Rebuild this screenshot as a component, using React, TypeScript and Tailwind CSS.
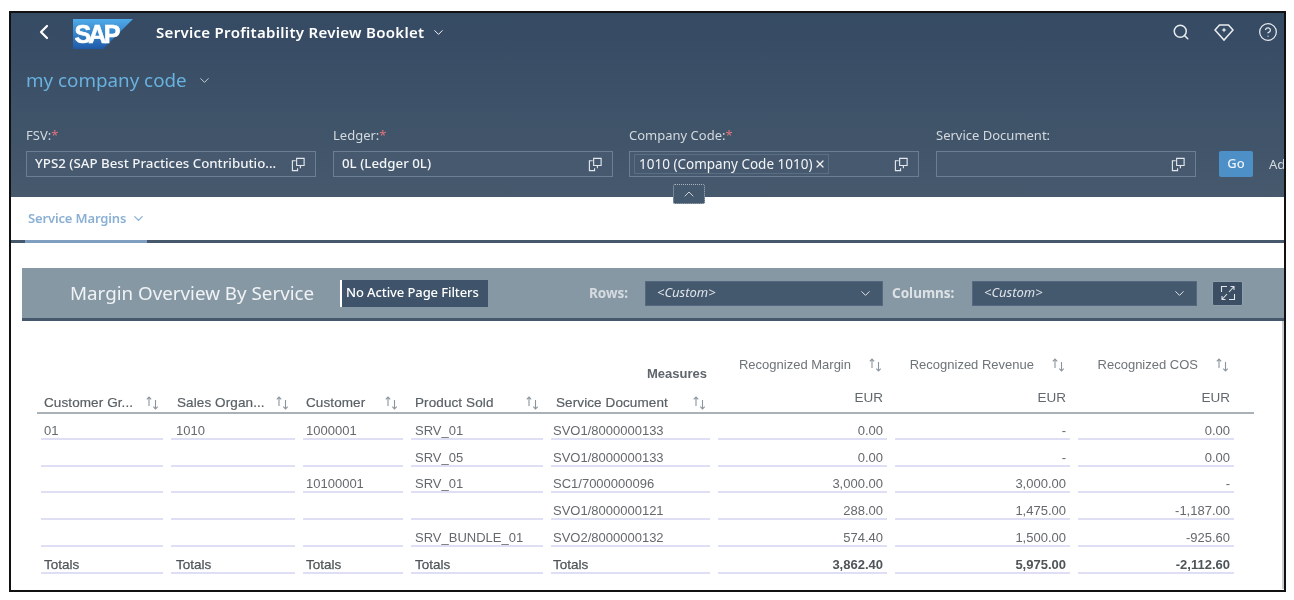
import { ChevronDown, ChevronLeft, ChevronUp, CircleHelp, Search, X } from "lucide-react";

const SortIcon = () => (
  <svg viewBox="0 0 15 14" className="w-[15px] h-[14px] shrink-0 text-[#8a949c]" fill="none" stroke="currentColor" strokeWidth="1.1">
    <path d="M4 10V1M1.8 3.4 4 1l2.2 2.4" />
    <path d="M10.5 4v9M8.3 10.6l2.2 2.4 2.2-2.4" />
  </svg>
);

const ValueHelpIcon = () => (
  <svg viewBox="0 0 16 16" className="w-[15px] h-[15px] shrink-0 text-[#e4e8ec]" fill="none" stroke="currentColor" strokeWidth="1.2">
    <path d="M5 4H1.5v10.5H7V12" />
    <path d="M6 1.5h8v7.5H6zM10 9v3" />
  </svg>
);

const DiamondIcon = () => (
  <svg viewBox="0 0 20 20" className="w-5 h-5 text-[#e8ecef]" fill="none" stroke="currentColor" strokeWidth="1.6">
    <path d="M5.5 3h9L19 8l-9 10L1 8z" />
    <path d="M10 5.5l.8 1.7 1.7.8-1.7.8-.8 1.7-.8-1.7-1.7-.8 1.7-.8z" fill="currentColor" stroke="none" />
  </svg>
);

const ExpandIcon = () => (
  <svg viewBox="0 0 16 16" className="w-4 h-4 text-[#dfe5ea]" fill="none" stroke="currentColor" strokeWidth="1.1">
    <path d="M7 1.5H1.5V7M9 14.5h5.5V9M9 7l5-5.5M10.5 1.5H14V5M7 9l-5 5.5M5.5 14.5H2V11" />
  </svg>
);

const SapLogo = () => (
  <svg viewBox="0 0 60 30" className="w-[60px] h-[30px] shrink-0">
    <defs>
      <linearGradient id="sapBlue" x1="0" y1="0" x2="0" y2="1">
        <stop offset="0" stopColor="#4fabe9" />
        <stop offset="1" stopColor="#1e5aa8" />
      </linearGradient>
    </defs>
    <polygon points="0,0 60,0 30,30 0,30" fill="url(#sapBlue)" />
    <text x="1.5" y="23.5" fontFamily="Liberation Sans, sans-serif" fontWeight="700" fontSize="25" letterSpacing="-2.8" stroke="#fff" strokeWidth="0.6" fill="#fff">
      SAP
    </text>
  </svg>
);

const Field = ({ label, required, value, width, chip }: { label: string; required?: boolean; value?: string; width: string; chip?: boolean }) => (
  <div className={`shrink-0 ${width}`}>
    <div className="h-[20px] text-[13px] leading-[20px] text-[#d3d9de]">
      {label}
      {required && <span className="text-[#e0737b]">*</span>}
    </div>
    <div className="mt-[6px] h-[26px] border border-[#6b7f93] bg-[#46596f] flex items-center justify-between pl-[8px] pr-[9px]">
      {chip ? (
        <span className="-ml-[4px] h-[20px] pl-[4px] pr-[2px] border border-[#5b6f84] flex items-center gap-[2px] text-[13.5px] text-[#f2f4f6]">
          {value}
          <X className="w-[12px] h-[12px]" strokeWidth={2.5} />
        </span>
      ) : (
        <span className="text-[13.3px] text-[#f2f4f6] font-medium">{value}</span>
      )}
      <ValueHelpIcon />
    </div>
  </div>
);

const SelectBox = ({ width }: { width: string }) => (
  <div className={`${width} h-[25px] bg-[#44586e] border border-[#54697f] flex items-center justify-between pl-[11px] pr-[9px]`}>
    <span className="italic text-[13px] text-[#dfe4e9]">&lt;Custom&gt;</span>
    <ChevronDown className="w-[15px] h-[15px] text-[#e8ecef]" strokeWidth={1.5} />
  </div>
);

const rows = [
  ["01", "1010", "1000001", "SRV_01", "SVO1/8000000133", "0.00", "-", "0.00"],
  ["", "", "", "SRV_05", "SVO1/8000000133", "0.00", "-", "0.00"],
  ["", "", "10100001", "SRV_01", "SC1/7000000096", "3,000.00", "3,000.00", "-"],
  ["", "", "", "", "SVO1/8000000121", "288.00", "1,475.00", "-1,187.00"],
  ["", "", "", "SRV_BUNDLE_01", "SVO2/8000000132", "574.40", "1,500.00", "-925.60"],
  ["Totals", "Totals", "Totals", "Totals", "Totals", "3,862.40", "5,975.00", "-2,112.60"],
];

const cellPadding = ["pl-[3px]", "pl-[5px]", "pl-[3px]", "pl-[4px]", "pl-[2px]", "justify-end pr-[4px]", "justify-end pr-[4px]", "justify-end pr-[4px]"];

const dimHeaders = [
  { name: "Customer Gr...", pad: "col-start-1 pl-[3px] pr-[3px]" },
  { name: "Sales Organ...", pad: "col-start-2 pl-[6px] pr-[5px]" },
  { name: "Customer", pad: "col-start-3 pl-[3px] pr-[4px]" },
  { name: "Product Sold", pad: "col-start-4 pl-[4px] pr-[3px]" },
  { name: "Service Document", pad: "col-start-5 pl-[5px] pr-[3px]" },
];

const unitCols = ["col-start-6", "col-start-7", "col-start-8"];

const measures = ["Recognized Margin", "Recognized Revenue", "Recognized COS"];

export default function App() {
  return (
    <div className="bg-white h-[600px] w-[1294px] overflow-hidden pt-[11px] pl-[9px] blur-[0.35px]" style={{ fontFamily: "'Noto Sans', sans-serif" }}>
      <div className="relative w-[1277px] h-[581px] border-2 border-[#111] overflow-hidden bg-white">
        {/* Shell header and filter bar */}
        <header className="h-[184px] bg-gradient-to-b from-[#354a63] to-[#46596d] text-white">
          <div className="h-[38px] flex items-center pl-[24px] pr-[6px]">
            <ChevronLeft className="w-[24px] h-[24px] -ml-[3px]" strokeWidth={2.2} />
            <div className="ml-[17px] mt-[3px]">
              <SapLogo />
            </div>
            <span className="ml-[23px] text-[15px] font-semibold tracking-[0.3px]">Service Profitability Review Booklet</span>
            <ChevronDown className="ml-[7px] w-[15px] h-[15px]" strokeWidth={1.5} />
            <div className="ml-auto flex items-center gap-[24px] text-[#e8ecef]">
              <Search className="w-[18px] h-[18px]" strokeWidth={2} />
              <DiamondIcon />
              <CircleHelp className="w-[20px] h-[20px]" strokeWidth={1.5} />
            </div>
          </div>

          <div className="mt-[14px] h-[30px] flex items-center pl-[15px]">
            <span className="text-[18.8px] text-[#69b1df]">my company code</span>
            <ChevronDown className="ml-[10px] w-[15px] h-[15px] text-[#c9d3dc]" strokeWidth={1.5} />
          </div>

          <div className="mt-[30px] flex items-end pl-[15px]">
            <Field label="FSV:" required width="w-[290px]" value="YPS2 (SAP Best Practices Contributio..." />
            <div className="w-[17px] shrink-0" />
            <Field label="Ledger:" required width="w-[280px]" value="0L (Ledger 0L)" />
            <div className="w-[16px] shrink-0" />
            <Field label="Company Code:" required width="w-[290px]" value="1010 (Company Code 1010)" chip />
            <div className="w-[17px] shrink-0" />
            <Field label="Service Document:" width="w-[260px]" />
            <button className="ml-[23px] w-[34px] h-[26px] shrink-0 rounded-[2px] bg-[#4d8fc7] text-[13px] font-medium text-[#eef3f7]">Go</button>
            <span className="ml-[16px] h-[26px] leading-[26px] text-[13px] text-[#d3d9de]">Ad</span>
          </div>
        </header>

        {/* Collapse handle sits over the header edge */}
        <div className="absolute left-[662px] top-[171px] w-[32px] h-[20px] bg-[#44586e] border border-dotted border-[#a9b6c2] rounded-[2px] flex items-center justify-center">
          <ChevronUp className="w-[16px] h-[16px] text-[#dfe5ea]" strokeWidth={1.3} />
        </div>

        {/* Tab bar */}
        <nav className="h-[46px] border-b-[3px] border-[#45586c] bg-white pl-[14px]">
          <div className="h-[46px] w-[122px] border-b-[3px] border-[#7f9fc0] flex items-center gap-[5px] pl-[3px]">
            <span className="text-[13px] font-semibold text-[#8ab0d4] tracking-[-0.15px] blur-[0.5px]">Service Margins</span>
            <ChevronDown className="w-[15px] h-[15px] text-[#8ab0d4]" strokeWidth={2} />
          </div>
        </nav>

        {/* Page body */}
        <main className="pl-[11px] pt-[25px] h-[349px]">
          <div className="h-[53px] bg-[#8798a5] border-b-[3px] border-[#45586c] flex items-center pl-[48px]">
            <span className="text-[18.8px] text-[#f0f3f5] w-[270px] shrink-0">Margin Overview By Service</span>
            <span className="h-[27px] w-[148px] shrink-0 flex items-center pl-[4px] bg-[#3f546b] border-l-2 border-white text-[13px] font-medium text-white tracking-[-0.1px]">
              No Active Page Filters
            </span>
            <span className="ml-[101px] w-[56px] shrink-0 text-[13.5px] font-bold text-[#d5dbe0]">Rows:</span>
            <SelectBox width="w-[238px] shrink-0" />
            <span className="ml-[9px] w-[80px] shrink-0 text-[13.5px] font-bold text-[#dde2e6]">Columns:</span>
            <SelectBox width="w-[225px] shrink-0" />
            <div className="ml-[15px] w-[31px] h-[25px] shrink-0 bg-[#3b4e63] border border-[#8ea0ae] rounded-[2px] flex items-center justify-center">
              <ExpandIcon />
            </div>
          </div>

          {/* Pivot table */}
          <div className="pl-[19px] pt-[26px] h-[268px] border-r-2 border-[#c9cdd1]" style={{ fontFamily: "'Liberation Sans', Arial, sans-serif" }}>
            <div className="grid grid-cols-[122px_124px_100px_132px_159px_169px_175px_156px] gap-x-2 grid-rows-[35px_31px_repeat(6,26.8px)] text-[13px] leading-[15px] text-[#65696d]">
              <div className="col-span-5 self-end pb-[1px] pr-[3px] text-right font-bold text-[#5f656a]">Measures</div>
              {measures.map((m) => (
                <div key={m} className="self-center flex items-center justify-end gap-[17px] pr-[4px] text-[#6e7478]">
                  {m}
                  <SortIcon />
                </div>
              ))}

              {dimHeaders.map((h) => (
                <div key={h.name} className={`row-start-2 self-end pb-[3px] flex items-center justify-between ${h.pad} text-[13.5px] tracking-[0.1px] text-[#596065] [-webkit-text-stroke:0.2px] whitespace-nowrap`}>
                  {h.name}
                  <SortIcon />
                </div>
              ))}
              {unitCols.map((col) => (
                <div key={col} className={`row-start-2 ${col} flex items-center justify-end pr-[4px] text-[13.5px] text-[#62686d]`}>
                  EUR
                </div>
              ))}
              {/* Header rule runs past the columns on both sides */}
              <div className="col-span-8 col-start-1 row-start-2 self-end h-[2px] -ml-[4px] -mr-[20px] -mb-[1px] bg-[#aab1b7]" />

              {rows.map((row, r) =>
                row.map((cell, c) => (
                  <div
                    key={`${r}-${c}`}
                    className={`flex items-end border-b-2 border-[#dedef4] ${cellPadding[c]} ${r === 5 ? (c > 4 ? "font-bold text-[#4f5458]" : "text-[#4f5458] text-[13.5px] [-webkit-text-stroke:0.25px]") : ""}`}
                  >
                    {cell}
                  </div>
                ))
              )}
            </div>
          </div>
        </main>
      </div>
    </div>
  );
}
